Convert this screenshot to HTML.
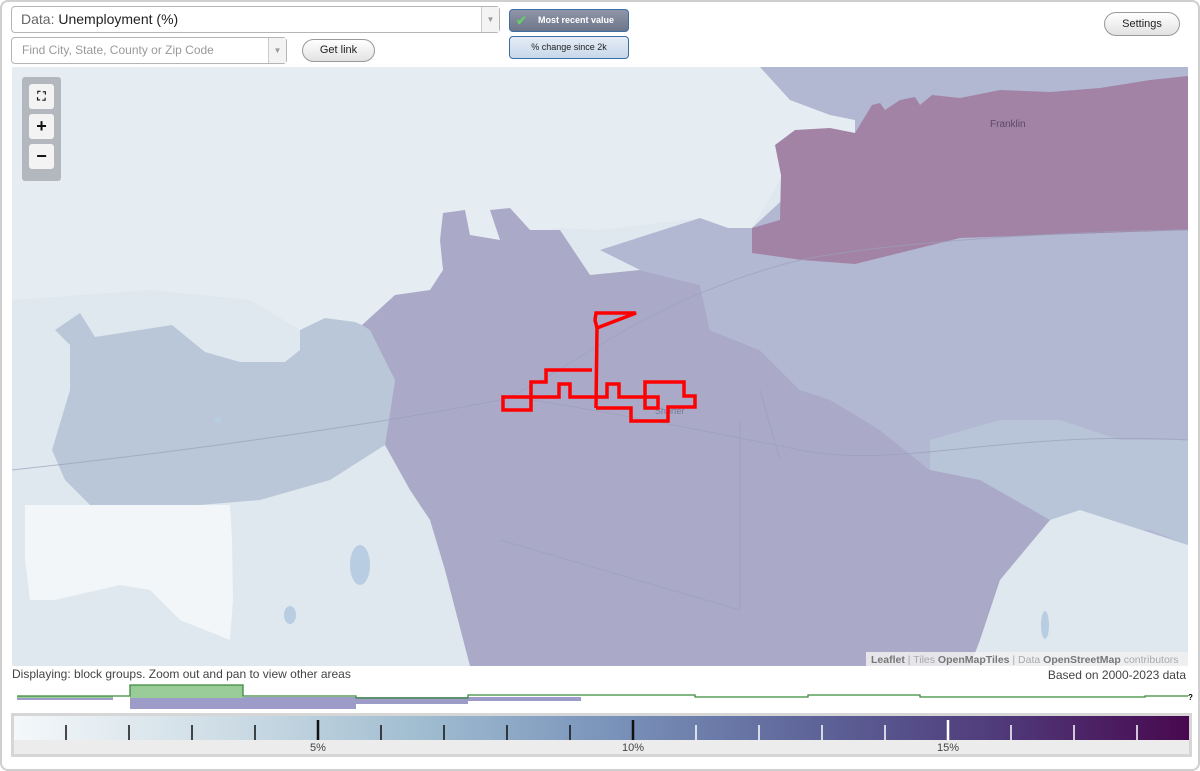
<!DOCTYPE html>
<html><head><meta charset="utf-8"><style>
*{box-sizing:border-box}
body{margin:0;width:1200px;height:771px;background:#fff;font-family:"Liberation Sans",Arial,sans-serif;overflow:hidden;position:relative}
.frame{position:absolute;left:0;top:0;width:1200px;height:771px;border:2px solid #cfcfcf;border-radius:8px}
.sel{position:absolute;background:#fff;border:1px solid #b5b5b5;border-radius:4px}
.arr{position:absolute;right:0;top:0;bottom:0;width:18px;border-left:1px solid #ccc;background:#f3f3f3;color:#999;font-size:8px;text-align:center}
.btn{position:absolute;border:1px solid #999;border-radius:12px;background:linear-gradient(#fff,#e2e2e2);font-size:11px;color:#222;text-align:center}
.tb{position:absolute;border:1px solid #3c6ea5;border-radius:4px;font-size:9px;text-align:center}
.ctl{position:absolute;left:22px;top:77px;width:39px;height:104px;background:#b2b8bd;border-radius:3px}
.cb{position:absolute;left:7px;width:25px;height:25px;background:#f3f3f3;border-radius:3px;text-align:center;font-weight:bold;font-size:18px;line-height:24px;color:#111}
</style></head><body>
<div class="frame"></div>
<div class="sel" style="left:11px;top:6px;width:489px;height:27px;font-size:14px;line-height:25px;padding-left:9px;color:#666">Data: <span style="color:#222">Unemployment (%)</span><div class="arr" style="line-height:25px">▼</div></div>
<div class="sel" style="left:11px;top:37px;width:276px;height:27px;font-size:12px;line-height:25px;padding-left:10px;color:#999">Find City, State, County or Zip Code<div class="arr" style="line-height:25px">▼</div></div>
<div class="btn" style="left:302px;top:39px;width:73px;height:23px;line-height:21px">Get link</div>
<div class="tb" style="left:509px;top:9px;width:120px;height:23px;line-height:21px;background:linear-gradient(#8f96a8,#6d7589);color:#fff;font-weight:bold;padding-left:14px"><span style="position:absolute;left:6px;top:0;color:#6c6;font-size:13px">✔</span>Most recent value</div>
<div class="tb" style="left:509px;top:36px;width:120px;height:23px;line-height:21px;background:linear-gradient(#e4edf6,#c8d8ea);color:#222">% change since 2k</div>
<div class="btn" style="left:1104px;top:12px;width:76px;height:24px;line-height:22px">Settings</div>

<svg style="position:absolute;left:12px;top:67px" width="1176" height="599" viewBox="12 67 1176 599">
<rect x="12" y="67" width="1176" height="599" fill="#dfe8ee"/>
<polygon points="12,67 760,67 790,100 830,115 855,120 855,133 800,140 780,180 752,228 728,228 700,218 600,230 560,228 500,240 470,250 440,290 362,325 300,330 250,300 150,290 12,300" fill="#e5edf2"/>
<polygon points="760,67 1188,67 1188,666 970,666 1050,520 930,470 880,430 800,390 760,350 710,330 700,285 640,270 600,250 700,218 728,228 752,228 855,133 855,120 830,115 790,100" fill="#b2b8d2"/>
<polygon points="930,440 1000,420 1060,420 1120,440 1188,440 1188,545 1150,530 1120,530 1090,525 1050,520 930,470" fill="#b8c4d8"/>
<polygon points="1050,520 1080,510 1188,545 1188,666 960,666 1000,590" fill="#dfe8ee"/>
<polygon points="752,228 780,220 781,175 775,145 795,130 830,128 855,133 872,105 880,103 885,110 900,100 915,97 920,105 932,95 960,98 1000,90 1050,92 1100,88 1150,80 1188,76 1188,230 960,238 855,264 802,260 752,253" fill="#a283a6"/>
<polygon points="55,330 80,313 95,337 140,330 172,325 205,352 240,362 285,362 300,350 300,330 325,318 355,322 362,325 395,300 400,330 395,380 385,445 330,480 260,500 200,505 90,505 65,480 52,450 70,390 70,345" fill="#bac7d8"/>
<polygon points="443,213 465,210 470,235 500,240 490,210 510,208 530,230 560,230 590,275 640,270 700,285 710,330 760,350 800,390 830,400 880,430 930,470 980,480 1050,520 1000,580 980,640 970,666 470,666 445,570 430,520 410,490 385,445 395,380 370,330 362,325 395,295 430,290 443,270 440,240" fill="#aaaac8"/>
<polygon points="25,505 230,505 232,540 233,600 230,640 180,620 150,590 120,585 55,600 30,600 25,560" fill="#f2f6f8"/>
<g fill="none" stroke="#9ba0bb" stroke-width="1" opacity=".7">
<path d="M12,470 C200,450 400,420 500,400 C560,380 640,300 800,260 C900,240 1100,230 1188,230"/>
<path d="M500,395 C600,410 700,430 800,450 C900,470 1000,430 1188,440"/>
<path d="M740,420 L740,610 M500,540 L740,610 M760,390 L780,460"/>
</g>
<g fill="#b8cde2"><ellipse cx="360" cy="565" rx="10" ry="20"/><ellipse cx="290" cy="615" rx="6" ry="9"/><ellipse cx="1045" cy="625" rx="4" ry="14"/><ellipse cx="218" cy="420" rx="4" ry="3"/></g>
<text x="990" y="127" font-size="10" fill="#5e4866" font-family="Liberation Sans">Franklin</text>
<text x="655" y="414" font-size="9" fill="#777a99" font-family="Liberation Sans">Shorter</text>
<g fill="none" stroke="#ff0000" stroke-width="3.5" stroke-linejoin="miter">
<path d="M597,328 L595,320 L596,313 L636,313 L597,328 L596,408"/>
<path d="M592,370 L546,370 L546,382 L531,382 L531,397 L503,397 L503,410 L531,410 L531,397 L559,397 L559,384 L570,384 L570,397 L596,397"/>
<path d="M596,397 L607,397 L607,384 L619,384 L619,397 L658,397 L658,408 L645,408 L645,382 L684,382 L684,396 L695,396 L695,407 L668,407 L668,421 L631,421 L631,408 L596,408"/>
</g>
<rect x="866" y="652" width="322" height="14" fill="#f0f0f0" opacity=".85"/>
<text x="871" y="663" font-size="10.5" fill="#666" font-family="Liberation Sans"><tspan font-weight="bold" fill="#777">Leaflet</tspan><tspan fill="#aaa"> | Tiles </tspan><tspan fill="#777" font-weight="bold">OpenMapTiles</tspan><tspan fill="#aaa"> | Data </tspan><tspan fill="#777" font-weight="bold">OpenStreetMap</tspan><tspan fill="#aaa"> contributors</tspan></text>
</svg>
<div class="ctl"><div class="cb" style="top:7px;font-size:12px">⛶</div><div class="cb" style="top:37px">+</div><div class="cb" style="top:67px">−</div></div>

<div style="position:absolute;left:12px;top:667px;font-size:12px;color:#444">Displaying: block groups. Zoom out and pan to view other areas</div>
<div style="position:absolute;right:14px;top:668px;font-size:12px;color:#444">Based on 2000-2023 data</div>
<svg style="position:absolute;left:0;top:680px" width="1200" height="32">
<rect x="17" y="17" width="96" height="3" fill="#9d9cc9"/><rect x="130" y="17" width="226" height="12" fill="#9d9cc9"/><rect x="356" y="17" width="112" height="7" fill="#9d9cc9"/><rect x="468" y="17" width="113" height="4" fill="#9d9cc9"/>
<rect x="17" y="16" width="96" height="2" fill="#9c9"/><rect x="130" y="5" width="113" height="13" fill="#9c9"/>
<path d="M17,16 H130 V5 H243 V16 H356 V18 H468 V15 H695 V17 H808 V15 H920 V17 H1145 V16 H1188" fill="none" stroke="#3a8a3a" stroke-width="1.3"/>
<text x="1188" y="20" font-size="8" font-weight="bold">?</text>
</svg>
<div style="position:absolute;left:11px;top:713px;width:1181px;height:44px;border:3px solid #d6d6d6;background:#ececec">
<div style="position:absolute;left:0;top:0;width:1175px;height:24px;background:linear-gradient(90deg,#f4f8fa 0%,#c9d9e3 20%,#9fbcd0 35%,#7b95bb 50%,#5b5f95 70%,#4f3777 85%,#48084f 100%)"></div>
<svg style="position:absolute;left:0;top:0" width="1175" height="38">
<g stroke="#111" stroke-width="1.5"><path d="M52,9V24M115,9V24M178,9V24M241,9V24M367,9V24M430,9V24M493,9V24M556,9V24"/><path d="M304,4V24M619,4V24" stroke-width="2.5"/></g>
<g stroke="#fff" stroke-width="1.5"><path d="M682,9V24M745,9V24M808,9V24M871,9V24M997,9V24M1060,9V24M1123,9V24"/><path d="M934,4V24" stroke-width="2.5"/></g>
<g font-size="11" fill="#444" font-family="Liberation Sans" text-anchor="middle"><text x="304" y="35">5%</text><text x="619" y="35">10%</text><text x="934" y="35">15%</text></g>
</svg></div>
</body></html>
